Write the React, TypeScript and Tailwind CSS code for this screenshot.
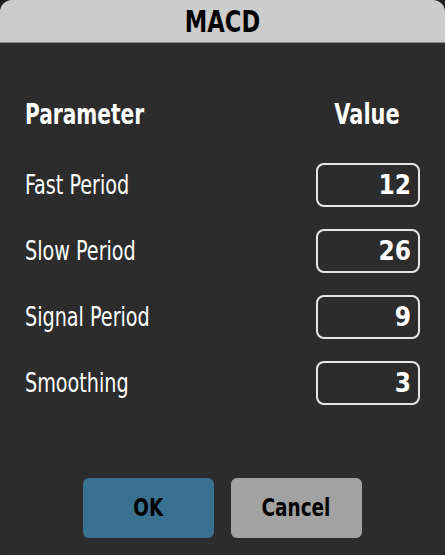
import { useState } from "react";

const params = [
  { label: "Fast Period", value: "12" },
  { label: "Slow Period", value: "26" },
  { label: "Signal Period", value: "9" },
  { label: "Smoothing", value: "3" },
];

// no condensed family is installed apart from DejaVu's, so squeeze it a bit more
const font = { fontFamily: '"DejaVu Sans Condensed", "Liberation Sans", sans-serif' };

export default function App() {
  const [values, setValues] = useState(params.map((p) => p.value));

  return (
    <div className="w-[445px] h-[555px] bg-[#1e1e1e]" style={font}>
      <div className="flex flex-col h-full bg-[#2c2c2c] rounded-t-[12px] rounded-b-[4px] overflow-hidden">
        <div className="h-[43px] shrink-0 bg-[#cccccc] border-b border-[#8a8a8a] flex items-center justify-center">
          <span className="inline-block scale-x-[0.81] text-[31px] font-bold text-black leading-none">MACD</span>
        </div>

        <div className="flex-1 flex flex-col px-[25px]">
          <div className="flex justify-between items-center mt-[58px] pr-[20px] text-[28px] font-bold text-white leading-none">
            <span className="inline-block origin-left scale-x-[0.8]">Parameter</span>
            <span className="inline-block origin-right scale-x-[0.83]">Value</span>
          </div>

          <div className="flex flex-col gap-[22px] mt-[34px]">
            {params.map((p, i) => (
              <div key={p.label} className="flex items-center justify-between">
                <span className="inline-block origin-left scale-x-[0.82] text-[26px] text-white leading-none">
                  {p.label}
                </span>
                <input
                  value={values[i]}
                  onChange={(e) => {
                    const next = [...values];
                    next[i] = e.target.value;
                    setValues(next);
                  }}
                  className="w-[104px] h-[44px] rounded-[8px] border-2 border-[#e6e6e6] bg-transparent text-right pr-[7px] text-[26px] font-bold text-white outline-none"
                  style={font}
                />
              </div>
            ))}
          </div>

          <div className="flex justify-center gap-[17px] mt-[73px] -ml-[1px]">
            <button className="w-[131px] h-[60px] rounded-[6px] bg-[#3a7090] text-black font-bold text-[25px]">
              <span className="inline-block scale-x-[0.82]">OK</span>
            </button>
            <button className="w-[131px] h-[60px] rounded-[6px] bg-[#a2a2a2] text-black font-bold text-[25px]">
              <span className="inline-block scale-x-[0.82]">Cancel</span>
            </button>
          </div>
        </div>
      </div>
    </div>
  );
}
